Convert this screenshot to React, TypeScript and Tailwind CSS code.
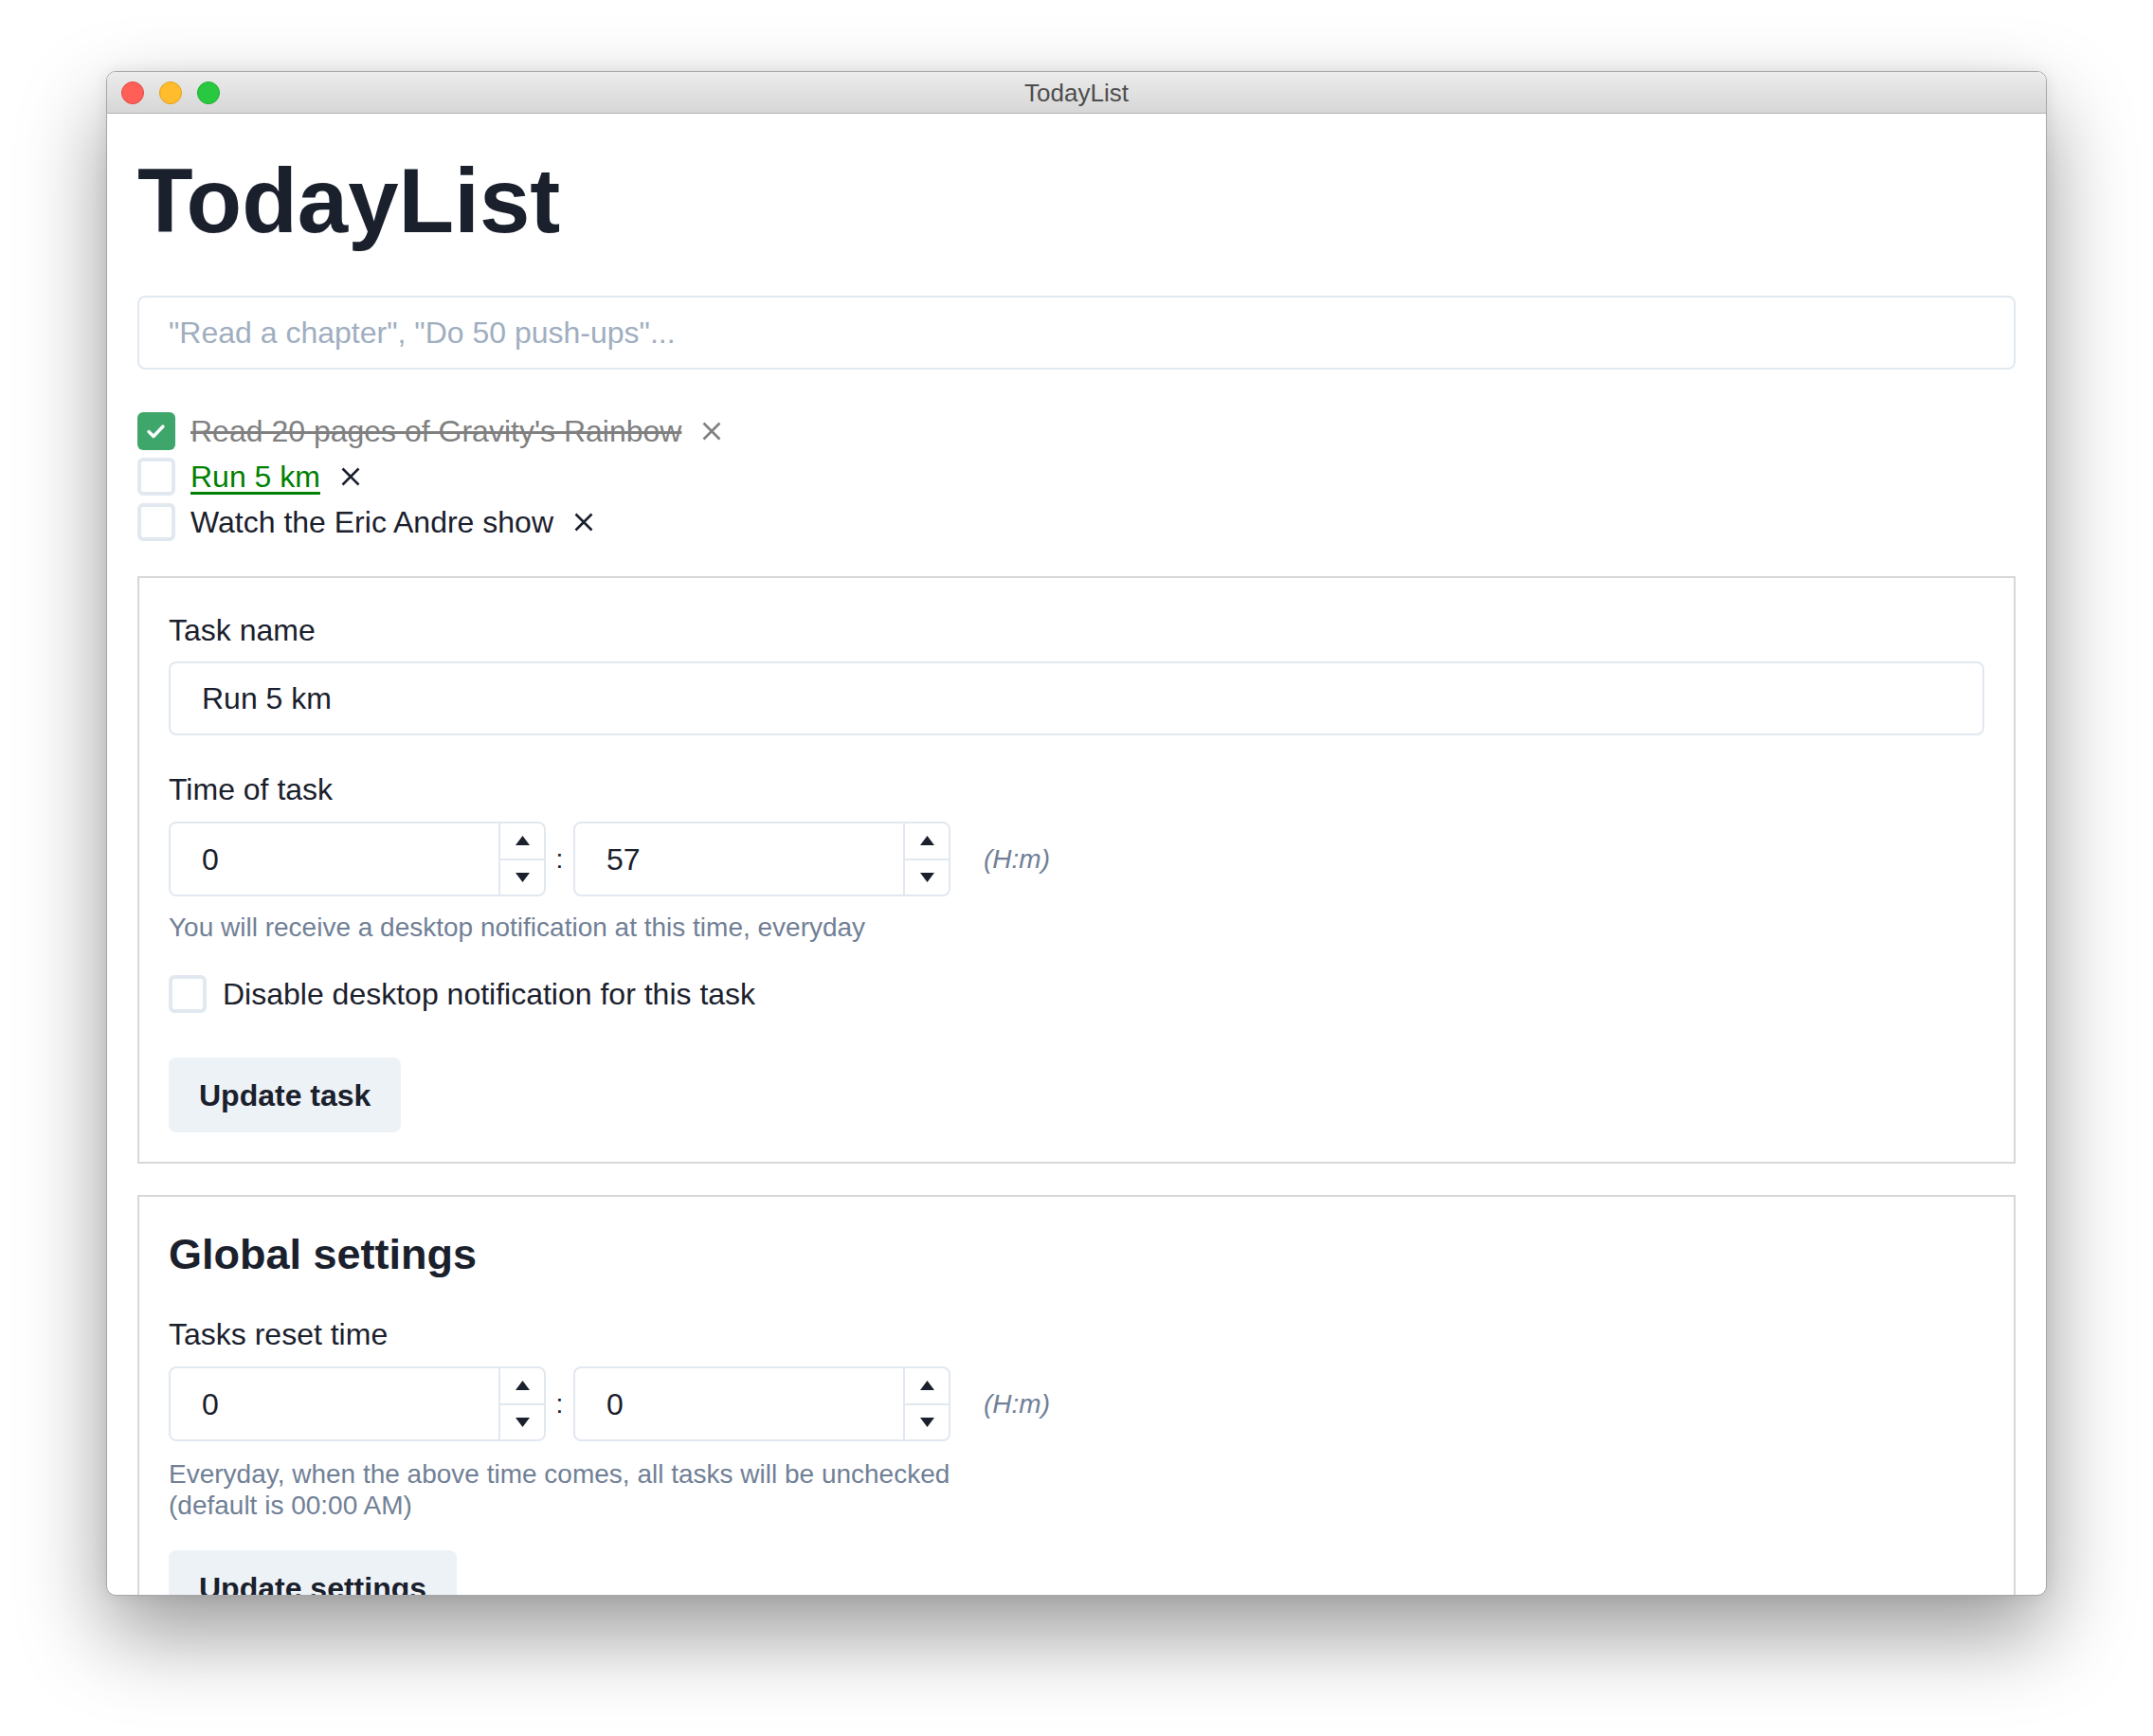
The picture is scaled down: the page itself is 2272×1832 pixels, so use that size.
import React from 'react';

const font = { fontFamily: '"Liberation Sans", Arial, Helvetica, sans-serif' };

const tasks = [
  { id: 1, name: "Read 20 pages of Gravity's Rainbow", done: true },
  { id: 2, name: 'Run 5 km', done: false, selected: true },
  { id: 3, name: 'Watch the Eric Andre show', done: false },
];

const CloseIcon = ({ color }: { color: string }) => (
  <svg width="20" height="20" viewBox="0 0 20 20" className="shrink-0">
    <path d="M1.5 1.5 L18.5 18.5 M18.5 1.5 L1.5 18.5" stroke={color} strokeWidth="2.6" strokeLinecap="butt" />
  </svg>
);

const Checkbox = ({ checked }: { checked?: boolean }) =>
  checked ? (
    <div className="flex h-[40px] w-[40px] shrink-0 items-center justify-center rounded-[6px] bg-[#3ea56b]">
      <svg width="40" height="40" viewBox="0 0 40 40">
        <polyline points="12,20.5 17,25.5 27,15" fill="none" stroke="#fff" strokeWidth="3.4" strokeLinecap="round" strokeLinejoin="round" />
      </svg>
    </div>
  ) : (
    <div className="h-[40px] w-[40px] shrink-0 rounded-[6px] border-4 border-[#e2e8f0] bg-white" />
  );

const NumberInput = ({ value }: { value: string }) => (
  <div className="flex h-[79px] w-[398px] rounded-[8px] border-2 border-[#e2e8f0] bg-white">
    <div className="flex flex-1 items-center pl-[33px] text-[32px] text-[#1a202c]">{value}</div>
    <div className="flex w-[48px] flex-col border-l-2 border-[#e2e8f0]">
      <div className="flex flex-1 items-center justify-center border-b-2 border-[#e2e8f0]">
        <svg width="15" height="10" viewBox="0 0 15 10">
          <polygon points="7.5,0 15,10 0,10" fill="#1a202c" />
        </svg>
      </div>
      <div className="flex flex-1 items-center justify-center">
        <svg width="15" height="10" viewBox="0 0 15 10">
          <polygon points="0,0 15,0 7.5,10" fill="#1a202c" />
        </svg>
      </div>
    </div>
  </div>
);

const TimeRow = ({ h, m }: { h: string; m: string }) => (
  <div className="flex items-center">
    <NumberInput value={h} />
    <span className="w-[29px] text-center text-[28px] text-[#1a202c]">:</span>
    <NumberInput value={m} />
    <span className="ml-[35px] text-[28px] italic text-[#718096]">(H:m)</span>
  </div>
);

export default function App() {
  return (
    <div className="flex min-h-screen justify-center bg-white pt-[75px] pb-[148px]" style={font}>
      <div className="flex h-[1609px] w-[2048px] flex-col overflow-hidden rounded-[10px] border border-[#a7a7a7] bg-white shadow-[0_40px_90px_rgba(0,0,0,0.4),0_0_16px_rgba(0,0,0,0.08)]">
        {/* title bar */}
        <div className="relative flex h-[44px] shrink-0 items-center justify-center border-b border-[#b4b4b4] bg-gradient-to-b from-[#ececec] to-[#d6d6d6]">
          <div className="absolute left-[15px] top-[10px] flex gap-[16px]">
            <span className="h-[24px] w-[24px] rounded-full border border-[#e2463f] bg-[#ff5f57]" />
            <span className="h-[24px] w-[24px] rounded-full border border-[#e1a116] bg-[#ffbd2e]" />
            <span className="h-[24px] w-[24px] rounded-full border border-[#1dad2b] bg-[#28c940]" />
          </div>
          <span className="pt-[2px] text-[26px] text-[#4d4d4d]">TodayList</span>
        </div>

        {/* content */}
        <div className="flex-1 overflow-hidden px-[32px] pt-[44px] text-[32px] leading-[48px] text-[#1a202c]">
          <h1 className="text-[96px] font-bold leading-[96px] text-[#1a202c]">TodayList</h1>

          <div className="mt-[52px] flex h-[78px] items-center rounded-[8px] border-2 border-[#e2e8f0] px-[31px] text-[#a0aec0]">
            "Read a chapter", "Do 50 push-ups"...
          </div>

          <ul className="mt-[41px]">
            {tasks.map((t) => (
              <li key={t.id} className="flex h-[48px] items-center">
                <Checkbox checked={t.done} />
                <span
                  className={
                    t.done
                      ? 'ml-[16px] text-[#808080] line-through'
                      : t.selected
                      ? 'ml-[16px] text-[#008000] underline underline-offset-[5px]'
                      : 'ml-[16px] text-[#1a202c]'
                  }
                >
                  {t.name}
                </span>
                <span className="ml-[22px] flex items-center">
                  <CloseIcon color={t.done ? '#808080' : '#1a202c'} />
                </span>
              </li>
            ))}
          </ul>

          {/* edit task */}
          <div className="mt-[33px] border-2 border-[#d7d7d7] px-[31px] pt-[31px] pb-[31px]">
            <div>Task name</div>
            <div className="mt-[9px] flex h-[78px] items-center rounded-[8px] border-2 border-[#e2e8f0] px-[33px]">
              Run 5 km
            </div>

            <div className="mt-[33px]">Time of task</div>
            <div className="mt-[10px]">
              <TimeRow h="0" m="57" />
            </div>
            <p className="mt-[16px] text-[28px] leading-[33px] text-[#718096]">
              You will receive a desktop notification at this time, everyday
            </p>

            <label className="mt-[30px] flex h-[48px] items-center">
              <Checkbox />
              <span className="ml-[17px]">Disable desktop notification for this task</span>
            </label>

            <button className="mt-[43px] flex h-[79px] items-center rounded-[8px] bg-[#edf2f7] px-[32px] font-bold text-[#1a202c]">
              Update task
            </button>
          </div>

          {/* global settings */}
          <div className="mt-[33px] border-2 border-[#d7d7d7] px-[31px] pt-[31px] pb-[30px]">
            <h2 className="text-[45px] font-bold leading-[60px]">Global settings</h2>
            <div className="mt-[30px]">Tasks reset time</div>
            <div className="mt-[10px]">
              <TimeRow h="0" m="0" />
            </div>
            <p className="mt-[18px] max-w-[826px] text-[28px] leading-[33px] text-[#718096]">
              Everyday, when the above time comes, all tasks will be unchecked (default is 00:00 AM)
            </p>
            <button className="mt-[31px] flex h-[79px] items-center rounded-[8px] bg-[#edf2f7] px-[32px] font-bold text-[#1a202c]">
              Update settings
            </button>
          </div>
        </div>
      </div>
    </div>
  );
}
